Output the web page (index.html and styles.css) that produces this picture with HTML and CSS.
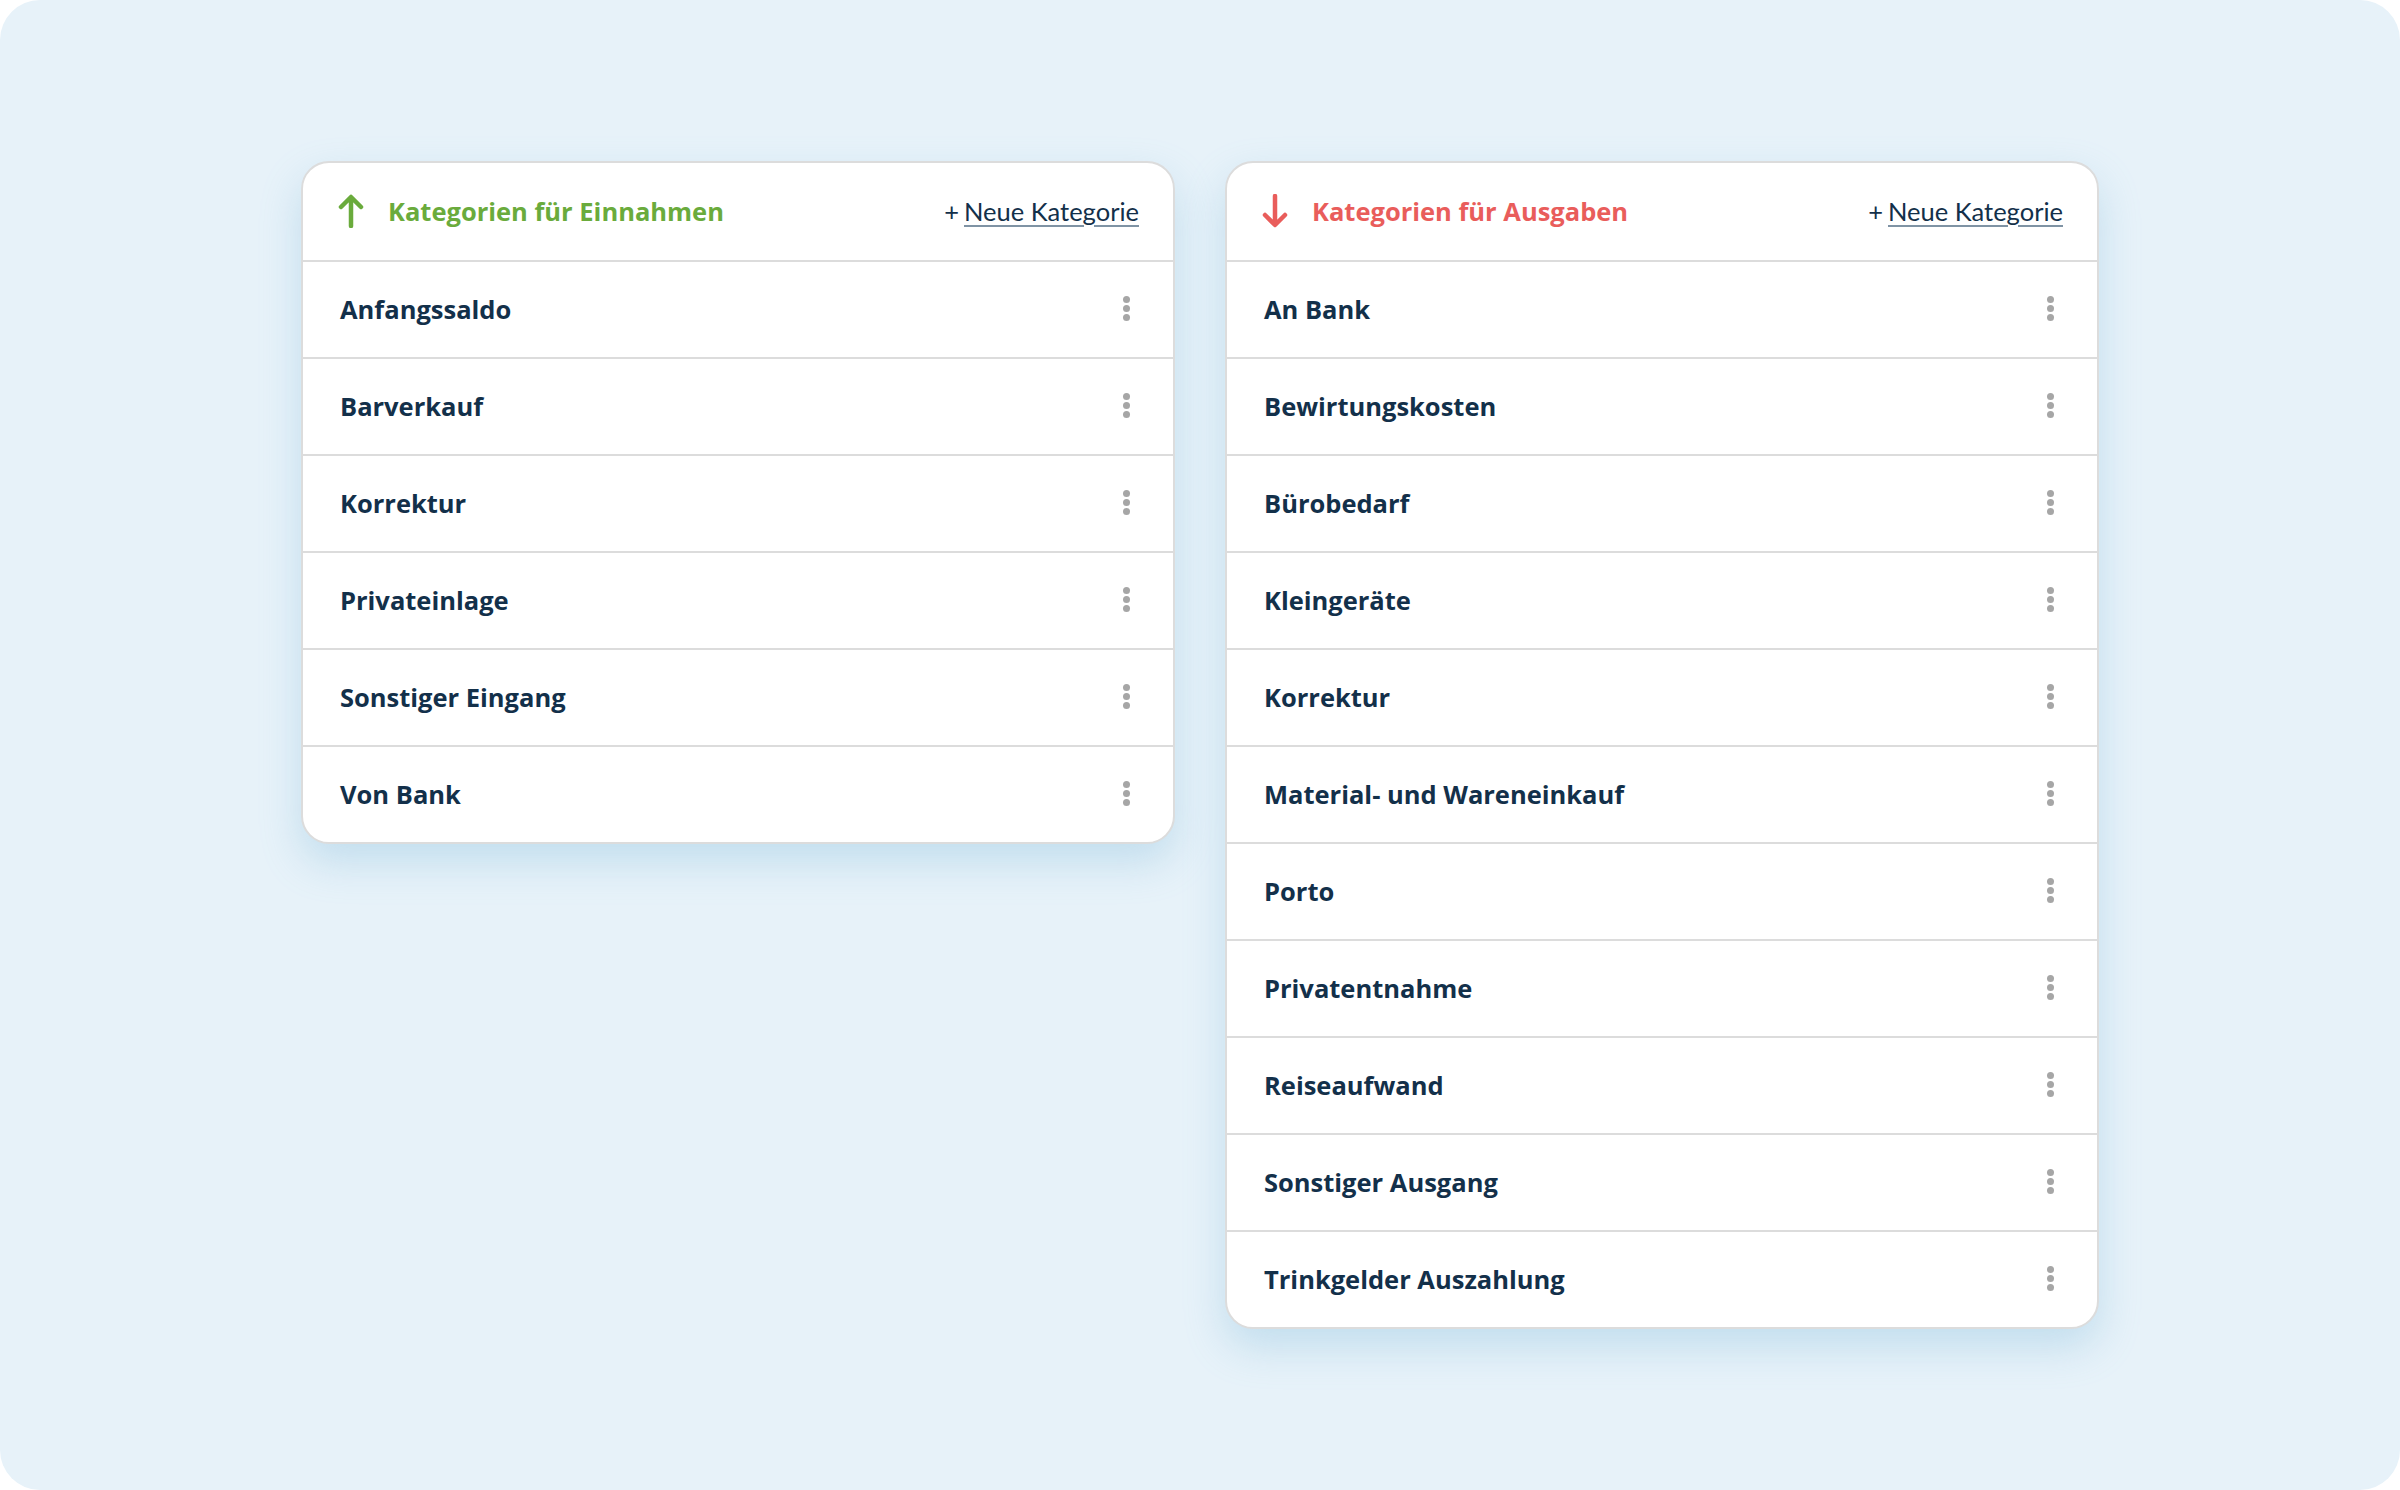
FILE: index.html
```html
<!DOCTYPE html>
<html lang="de">
<head>
  <meta charset="UTF-8">
  <title>Kategorien</title>
  <meta name="viewport" content="width=device-width,initial-scale=1"/>
  <link rel="stylesheet" href="styles.css">
</head>
<body>
<div class="board">
  <!-- Einnahmen -->
  <section class="card">
    <div class="card-head">
      <div class="title income">
        <svg class="arrow" width="26" height="34" viewBox="0 0 26 34">
          <path d="M13 32V4M3 13L13 3l10 10" fill="none" stroke="currentColor" stroke-width="4.5" stroke-linecap="round" stroke-linejoin="round"/>
        </svg>
        Kategorien für Einnahmen
      </div>
      <a class="add" href="#"><span class="plus">+</span><span class="add-text">Neue Kategorie</span></a>
    </div>
    <ul class="list">
      <li><span>Anfangssaldo</span><i class="more"></i></li>
      <li><span>Barverkauf</span><i class="more"></i></li>
      <li><span>Korrektur</span><i class="more"></i></li>
      <li><span>Privateinlage</span><i class="more"></i></li>
      <li><span>Sonstiger Eingang</span><i class="more"></i></li>
      <li><span>Von Bank</span><i class="more"></i></li>
    </ul>
  </section>

  <!-- Ausgaben -->
  <section class="card">
    <div class="card-head">
      <div class="title expense">
        <svg class="arrow" width="26" height="34" viewBox="0 0 26 34">
          <path d="M13 2v28M3 21l10 10 10-10" fill="none" stroke="currentColor" stroke-width="4.5" stroke-linecap="round" stroke-linejoin="round"/>
        </svg>
        Kategorien für Ausgaben
      </div>
      <a class="add" href="#"><span class="plus">+</span><span class="add-text">Neue Kategorie</span></a>
    </div>
    <ul class="list">
      <li><span>An Bank</span><i class="more"></i></li>
      <li><span>Bewirtungskosten</span><i class="more"></i></li>
      <li><span>Bürobedarf</span><i class="more"></i></li>
      <li><span>Kleingeräte</span><i class="more"></i></li>
      <li><span>Korrektur</span><i class="more"></i></li>
      <li><span>Material- und Wareneinkauf</span><i class="more"></i></li>
      <li><span>Porto</span><i class="more"></i></li>
      <li><span>Privatentnahme</span><i class="more"></i></li>
      <li><span>Reiseaufwand</span><i class="more"></i></li>
      <li><span>Sonstiger Ausgang</span><i class="more"></i></li>
      <li><span>Trinkgelder Auszahlung</span><i class="more"></i></li>
    </ul>
  </section>
</div>
</body>
</html>
```

FILE: styles.css
```css
:root {
  --color-text: #13304a;
  --color-line: #dcdcdc;
  --color-income: #6aab3c;
  --color-expense: #e95d5b;
  --color-board: #e7f2f9;
}

* {
  box-sizing: border-box;
}

html,
body {
  margin: 0;
  padding: 0;
  background: #fff;
}

body {
  font-family: "Open Sans", "Noto Sans", sans-serif;
  color: var(--color-text);
}

.board {
  width: 2400px;
  height: 1490px;
  border-radius: 40px;
  background: var(--color-board);
  display: flex;
  justify-content: center;
  align-items: flex-start;
  gap: 50px;
  padding-top: 161px;
}

.card {
  width: 874px;
  background: #fff;
  border: 2px solid var(--color-line);
  border-radius: 28px;
  overflow: hidden;
  box-shadow: 0 18px 40px rgba(110, 175, 212, 0.3);
}

.card-head {
  height: 97px;
  display: flex;
  align-items: center;
  justify-content: space-between;
  padding: 0 34px 2px 35px;
}

.title {
  display: flex;
  align-items: center;
  gap: 24px;
  font-size: 25.5px;
  font-weight: 700;
}

.title.income {
  color: var(--color-income);
}

.title.expense {
  color: var(--color-expense);
}

.arrow {
  display: block;
  margin-top: 1px;
}

.add {
  display: flex;
  align-items: baseline;
  gap: 5px;
  font-family: Lato, "Open Sans", sans-serif;
  font-size: 25.5px;
  color: var(--color-text);
  text-decoration: none;
}

.add-text {
  text-decoration: underline;
  text-decoration-color: #7f93a4;
  text-decoration-thickness: 2px;
  text-underline-offset: 4px;
}

.list {
  list-style: none;
  margin: 0;
  padding: 0;
}

.list li {
  height: 97px;
  border-top: 2px solid var(--color-line);
  display: flex;
  align-items: center;
  justify-content: space-between;
  padding: 0 43px 2px 37px;
  font-size: 25.5px;
  font-weight: 700;
}

/* three dots menu */
.more {
  width: 7px;
  height: 7px;
  border-radius: 50%;
  background: #a6a6a6;
  box-shadow: 0 -9px 0 #a6a6a6, 0 9px 0 #a6a6a6;
}
```
